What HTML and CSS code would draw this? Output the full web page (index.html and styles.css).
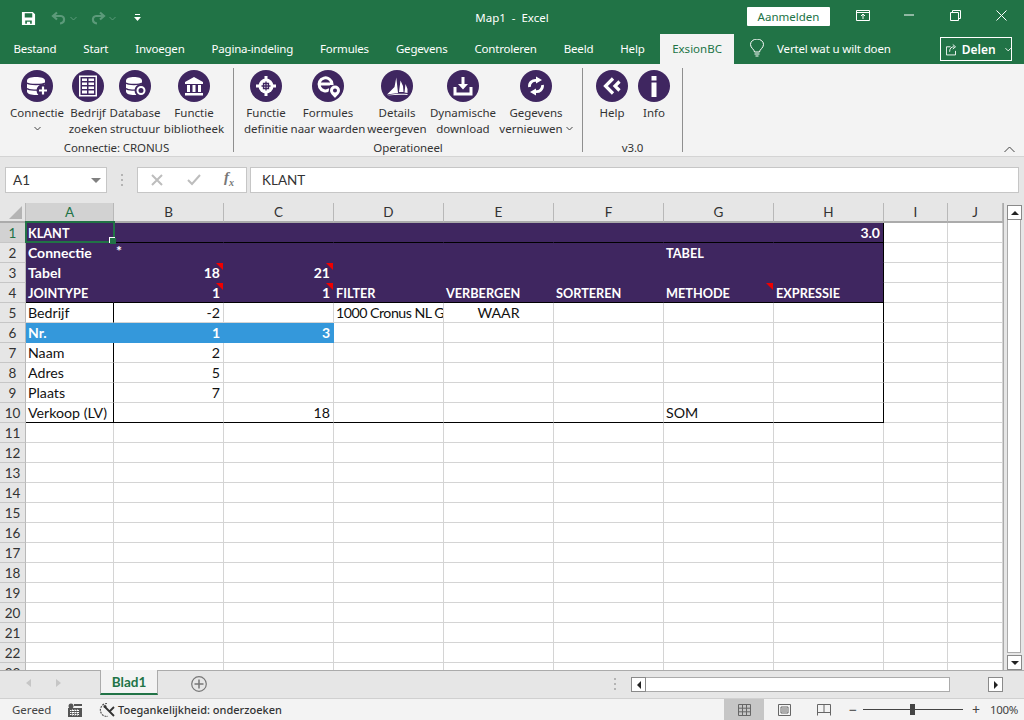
FILE: index.html
```html
<!DOCTYPE html>
<html lang="nl">

<head>
    <meta charset="UTF-8">
    <title>Map1 - Excel</title>
    <link rel="stylesheet" href="styles.css">
</head>

<body>
    <div class="app">
        <!-- Title bar -->
        <header class="titlebar">
            <div class="qat">
                <svg class="qat-save" width="15" height="15" viewBox="0 0 16 16"><path fill="#fff" fill-rule="evenodd" d="M1 1h11.500L15 3.500V15H1zM4 2.500V7h8V2.500zM4.500 10v3.600h1.800V11.500h3.400v2.100h1.800V10z"/></svg>
                <svg class="qat-undo" width="16" height="14" viewBox="0 0 16 14"><path fill="none" stroke="#5c9a7a" stroke-width="2.200" d="M6 1.500L2 5l4 3.500M2.500 5H10c4 0 4.500 7-1 7.500"/></svg>
                <svg class="qat-caret" width="7" height="5" viewBox="0 0 7 5"><path fill="none" stroke="#5c9a7a" d="M.5 1l3 3 3-3"/></svg>
                <svg class="qat-redo" width="16" height="14" viewBox="0 0 16 14"><path fill="none" stroke="#5c9a7a" stroke-width="2.200" d="M10 1.500L14 5l-4 3.500M13.500 5H6c-4 0-4.500 7 1 7.500"/></svg>
                <svg class="qat-caret" width="7" height="5" viewBox="0 0 7 5"><path fill="none" stroke="#5c9a7a" d="M.5 1l3 3 3-3"/></svg>
                <svg class="qat-more" width="7" height="8" viewBox="0 0 7 8"><path fill="#fff" d="M1 0h5v1H1zM0 3h7L3.500 7z"/></svg>
            </div>
            <div class="doc-title">Map1&nbsp; -&nbsp; Excel</div>
            <div class="win-area">
                <button class="signin">Aanmelden</button>
                <span class="win-btn"><svg width="14" height="11" viewBox="0 0 14 11"><path fill="none" stroke="#fff" d="M.5.500h13v10H.5zM.5 2.500h13M7 9V4.500M5 6l2-2 2 2"/></svg></span>
                <span class="win-btn"><svg width="10" height="2" viewBox="0 0 10 2"><path stroke="#fff" d="M0 1h10"/></svg></span>
                <span class="win-btn"><svg width="11" height="11" viewBox="0 0 11 11"><path fill="none" stroke="#fff" d="M.5 2.500h8v8h-8zM2.500 2.500v-2h8v8h-2"/></svg></span>
                <span class="win-btn"><svg width="11" height="11" viewBox="0 0 11 11"><path fill="none" stroke="#fff" d="M.5.500l10 10M10.500.500l-10 10"/></svg></span>
            </div>
        </header>

        <!-- Ribbon tabs -->
        <nav class="tabs">
            <a>Bestand</a>
            <a>Start</a>
            <a>Invoegen</a>
            <a>Pagina-indeling</a>
            <a>Formules</a>
            <a>Gegevens</a>
            <a>Controleren</a>
            <a>Beeld</a>
            <a>Help</a>
            <a class="active">ExsionBC</a>
            <div class="tell">
                <svg width="14" height="18" viewBox="0 0 14 18"><path fill="none" stroke="#fff" d="M4.500 13c0-2.500-4-4-4-7.500a6.500 5.500 0 0 1 13 0c0 3.500-4 5-4 7.500zM4.500 15h5M5.500 17h3"/></svg>
                <span>Vertel wat u wilt doen</span>
            </div>
            <div class="share">
                <svg width="13" height="13" viewBox="0 0 13 13"><path fill="none" stroke="#fff" d="M5 3.500H.5v9h10V8M4 9c0-4 2-5.500 5-5.500M7.500 1l3 2.500-3 2.500" /></svg>
                <b>Delen</b>
                <svg class="share-caret" width="7" height="5" viewBox="0 0 7 5"><path fill="none" stroke="#fff" d="M.5 1l3 3 3-3"/></svg>
            </div>
        </nav>

        <!-- Ribbon -->
        <section class="ribbon">
            <div class="group group-connect">
                <div class="buttons">
                    <div class="rbtn">
                        <svg class="ricon" viewBox="0 0 32 32"><circle cx="16" cy="16" r="16" fill="#3f2660"/><path fill="#fff" d="M6 10.500C6 8 10.500 7 15 7s9 1 9 3.500v11c0 2.500-4.500 3.500-9 3.500s-9-1-9-3.500z"/><path fill="none" stroke="#3f2660" stroke-width="1.300" d="M6 13c2 2 16 2 18 0M6 18.500c2 2 12 2 14 1"/><circle cx="22" cy="20.500" r="6.500" fill="#3f2660"/><path stroke="#fff" stroke-width="2.200" d="M18 20.500h8M22 16.500v8"/></svg>
                        <span>Connectie<br><svg class="caret" width="7" height="5" viewBox="0 0 7 5"><path fill="none" stroke="#444" d="M.5 1l3 3 3-3"/></svg></span>
                    </div>
                    <div class="rbtn">
                        <svg class="ricon" viewBox="0 0 32 32"><circle cx="16" cy="16" r="16" fill="#3f2660"/><path fill="#fff" fill-rule="evenodd" d="M7 5.500h18v21H7zM8.500 7v18h15V7z"/><path fill="#fff" d="M10 8.500h5v2.500h-5zM16.500 8.500H22V11h-5.500zM10 12.500h5V15h-5zM16.500 12.500H22V15h-5.500zM10 16.500h5V19h-5zM16.500 16.500H22V19h-5.500zM10 20.500h5v3h-5zM16.500 20.500H22v3h-5.500z"/></svg>
                        <span>Bedrijf<br>zoeken</span>
                    </div>
                    <div class="rbtn">
                        <svg class="ricon" viewBox="0 0 32 32"><circle cx="16" cy="16" r="16" fill="#3f2660"/><path fill="#fff" d="M7 10.500C7 8 11 7 15 7s8 1 8 3.500v11c0 2.500-4 3.500-8 3.500s-8-1-8-3.500z"/><path fill="none" stroke="#3f2660" stroke-width="1.300" d="M7 13c2 2 14 2 16 0M7 18.500c2 2 10 2 12 1"/><circle cx="22" cy="20.500" r="6.500" fill="#3f2660"/><circle cx="22" cy="20.500" r="3.500" fill="none" stroke="#fff" stroke-width="2"/></svg>
                        <span>Database<br>structuur</span>
                    </div>
                    <div class="rbtn">
                        <svg class="ricon" viewBox="0 0 32 32"><circle cx="16" cy="16" r="16" fill="#3f2660"/><path fill="#fff" d="M16 7l9 5v2H7v-2zM9 15h3v7H9zM14.500 15h3v7h-3zM20 15h3v7h-3zM7 23h18v2.500H7z"/></svg>
                        <span>Functie<br>bibliotheek</span>
                    </div>
                </div>
                <div class="group-label">Connectie: CRONUS</div>
            </div>

            <div class="group group-oper">
                <div class="buttons">
                    <div class="rbtn">
                        <svg class="ricon" viewBox="0 0 32 32"><circle cx="16" cy="16" r="16" fill="#3f2660"/><circle cx="16" cy="16" r="7.500" fill="#fff"/><path stroke="#fff" stroke-width="3" d="M16 6v3M16 23v3M6 16h3M23 16h3"/><path fill="none" stroke="#3f2660" stroke-width="1.300" d="M16 11.500v9M11.500 16h9M13.500 13.500h5v5h-5z"/></svg>
                        <span>Functie<br>definitie</span>
                    </div>
                    <div class="rbtn">
                        <svg class="ricon" viewBox="0 0 32 32"><circle cx="16" cy="16" r="16" fill="#3f2660"/><path fill="none" stroke="#fff" stroke-width="3" d="M7.500 14H20a6.500 6.500 0 1 0-2.500 5.500"/><path fill="#3f2660" d="M16 24l2-9 11 1-3 11-4 3z"/><path fill="#fff" fill-rule="evenodd" d="M23 15.500a5 5 0 0 1 5 5c0 3-3 5-5 7.500-2-2.500-5-4.500-5-7.500a5 5 0 0 1 5-5zM23 18.500a2 2 0 1 0 0 4 2 2 0 0 0 0-4z"/></svg>
                        <span>Formules<br>naar waarden</span>
                    </div>
                    <div class="rbtn">
                        <svg class="ricon" viewBox="0 0 32 32"><circle cx="16" cy="16" r="16" fill="#3f2660"/><path fill="#fff" d="M6 24.500l7.500-7.500 1.800-9.500 1.700 15.500zM18 22l1.500-11.500 2.500 5.500.5 6zM23.500 22.500l1-8.500 2 5v4zM6 25.500c6-2 14-2 20.500-1.500v1c-7-.5-14 0-20.500.5z"/></svg>
                        <span>Details<br>weergeven</span>
                    </div>
                    <div class="rbtn">
                        <svg class="ricon" viewBox="0 0 32 32"><circle cx="16" cy="16" r="16" fill="#3f2660"/><path fill="none" stroke="#fff" stroke-width="3" d="M8 17v7h16v-7"/><path fill="#fff" d="M14.500 7h3v7H21l-5 5.500-5-5.500h3.500z"/></svg>
                        <span>Dynamische<br>download</span>
                    </div>
                    <div class="rbtn">
                        <svg class="ricon" viewBox="0 0 32 32"><circle cx="16" cy="16" r="16" fill="#3f2660"/><path fill="none" stroke="#fff" stroke-width="2.800" d="M9.500 17c-.5-4 3-7.500 7.500-6.500M22.500 15c.5 4-3 7.500-7.500 6.500"/><path fill="#fff" d="M16 6.500l6 3.500-6 3.500zM16 18.500v7L10 22z"/></svg>
                        <span>Gegevens<br>vernieuwen <svg class="caret" width="7" height="5" viewBox="0 0 7 5"><path fill="none" stroke="#444" d="M.5 1l3 3 3-3"/></svg></span>
                    </div>
                </div>
                <div class="group-label">Operationeel</div>
            </div>

            <div class="group group-help">
                <div class="buttons">
                    <div class="rbtn">
                        <svg class="ricon" viewBox="0 0 32 32"><circle cx="16" cy="16" r="16" fill="#3f2660"/><path fill="none" stroke="#fff" stroke-width="3.200" d="M17 8.500L9.500 16l7.500 7.500M23.500 11.500L19 16l4.500 4.500"/></svg>
                        <span>Help</span>
                    </div>
                    <div class="rbtn">
                        <svg class="ricon" viewBox="0 0 32 32"><circle cx="16" cy="16" r="16" fill="#3f2660"/><path fill="#fff" d="M13.500 6h5v4.500h-5zM13.500 12.500h5V27h-5z"/></svg>
                        <span>Info</span>
                    </div>
                </div>
                <div class="group-label">v3.0</div>
            </div>

            <svg class="collapse" width="11" height="7" viewBox="0 0 11 7"><path fill="none" stroke="#444" d="M.5 6l5-5 5 5"/></svg>
        </section>

        <!-- Formula bar -->
        <section class="formulabar">
            <div class="namebox"><span>A1</span><i class="namebox-arrow"></i></div>
            <div class="grip"><i></i><i></i><i></i></div>
            <div class="fx-group">
                <svg width="14" height="12" viewBox="0 0 14 12"><path fill="none" stroke="#bdbdbd" stroke-width="2" d="M2 1l10 10M12 1L2 11"/></svg>
                <svg width="14" height="12" viewBox="0 0 14 12"><path fill="none" stroke="#bdbdbd" stroke-width="2" d="M1 6l4 4 8-9"/></svg>
                <span class="fx">f<sub>x</sub></span>
            </div>
            <div class="formula-input">KLANT</div>
        </section>

        <!-- Sheet -->
        <section class="sheet-area">
            <div class="sheet">
                <table class="grid">
                    <colgroup>
                        <col class="col-head">
                        <col class="col-a">
                        <col class="col-std" span="7">
                        <col class="col-i">
                        <col class="col-j">
                    </colgroup>
                    <thead>
                        <tr>
                            <th class="corner"><i class="corner-mark"></i></th>
                            <th class="current">A</th><th>B</th><th>C</th><th>D</th><th>E</th><th>F</th><th>G</th><th>H</th><th>I</th><th>J</th>
                        </tr>
                    </thead>
                    <tbody>
                        <tr>
                            <th class="current">1</th>
                            <td class="fill base b caps active-cell"><span class="selection"><i class="handle"></i></span>KLANT</td>
                            <td class="fill base"></td><td class="fill base"></td><td class="fill base"></td><td class="fill base"></td><td class="fill base"></td><td class="fill base"></td>
                            <td class="fill base edge b right">3.0</td>
                            <td></td><td></td>
                        </tr>
                        <tr>
                            <th>2</th>
                            <td class="fill b">Connectie</td>
                            <td class="fill b star">*</td>
                            <td class="fill"></td><td class="fill"></td><td class="fill"></td><td class="fill"></td>
                            <td class="fill b caps">TABEL</td>
                            <td class="fill edge"></td>
                            <td></td><td></td>
                        </tr>
                        <tr>
                            <th>3</th>
                            <td class="fill b">Tabel</td>
                            <td class="fill b right"><i class="note"></i>18</td>
                            <td class="fill b right"><i class="note"></i>21</td>
                            <td class="fill"></td><td class="fill"></td><td class="fill"></td><td class="fill"></td>
                            <td class="fill edge"></td>
                            <td></td><td></td>
                        </tr>
                        <tr>
                            <th>4</th>
                            <td class="fill base b caps">JOINTYPE</td>
                            <td class="fill base b right"><i class="note"></i>1</td>
                            <td class="fill base b right"><i class="note"></i>1</td>
                            <td class="fill base b caps">FILTER</td>
                            <td class="fill base b caps">VERBERGEN</td>
                            <td class="fill base b caps">SORTEREN</td>
                            <td class="fill base b caps"><i class="note"></i>METHODE</td>
                            <td class="fill base edge b caps">EXPRESSIE</td>
                            <td></td><td></td>
                        </tr>
                        <tr>
                            <th>5</th>
                            <td class="edge">Bedrijf</td>
                            <td class="right">-2</td>
                            <td></td>
                            <td class="clip">1000 Cronus NL Ge</td>
                            <td class="center">WAAR</td>
                            <td></td><td></td>
                            <td class="edge"></td>
                            <td></td><td></td>
                        </tr>
                        <tr>
                            <th>6</th>
                            <td class="hilite b">Nr.</td>
                            <td class="hilite b right">1</td>
                            <td class="hilite b right">3</td>
                            <td></td><td></td><td></td><td></td>
                            <td class="edge"></td>
                            <td></td><td></td>
                        </tr>
                        <tr>
                            <th>7</th>
                            <td class="edge">Naam</td>
                            <td class="right">2</td>
                            <td></td><td></td><td></td><td></td><td></td>
                            <td class="edge"></td>
                            <td></td><td></td>
                        </tr>
                        <tr>
                            <th>8</th>
                            <td class="edge">Adres</td>
                            <td class="right">5</td>
                            <td></td><td></td><td></td><td></td><td></td>
                            <td class="edge"></td>
                            <td></td><td></td>
                        </tr>
                        <tr>
                            <th>9</th>
                            <td class="edge">Plaats</td>
                            <td class="right">7</td>
                            <td></td><td></td><td></td><td></td><td></td>
                            <td class="edge"></td>
                            <td></td><td></td>
                        </tr>
                        <tr>
                            <th>10</th>
                            <td class="edge base">Verkoop (LV)</td>
                            <td class="base"></td>
                            <td class="base right">18</td>
                            <td class="base"></td><td class="base"></td><td class="base"></td>
                            <td class="base">SOM</td>
                            <td class="edge base"></td>
                            <td></td><td></td>
                        </tr>
                        <tr><th>11</th><td></td><td></td><td></td><td></td><td></td><td></td><td></td><td></td><td></td><td></td></tr>
                        <tr><th>12</th><td></td><td></td><td></td><td></td><td></td><td></td><td></td><td></td><td></td><td></td></tr>
                        <tr><th>13</th><td></td><td></td><td></td><td></td><td></td><td></td><td></td><td></td><td></td><td></td></tr>
                        <tr><th>14</th><td></td><td></td><td></td><td></td><td></td><td></td><td></td><td></td><td></td><td></td></tr>
                        <tr><th>15</th><td></td><td></td><td></td><td></td><td></td><td></td><td></td><td></td><td></td><td></td></tr>
                        <tr><th>16</th><td></td><td></td><td></td><td></td><td></td><td></td><td></td><td></td><td></td><td></td></tr>
                        <tr><th>17</th><td></td><td></td><td></td><td></td><td></td><td></td><td></td><td></td><td></td><td></td></tr>
                        <tr><th>18</th><td></td><td></td><td></td><td></td><td></td><td></td><td></td><td></td><td></td><td></td></tr>
                        <tr><th>19</th><td></td><td></td><td></td><td></td><td></td><td></td><td></td><td></td><td></td><td></td></tr>
                        <tr><th>20</th><td></td><td></td><td></td><td></td><td></td><td></td><td></td><td></td><td></td><td></td></tr>
                        <tr><th>21</th><td></td><td></td><td></td><td></td><td></td><td></td><td></td><td></td><td></td><td></td></tr>
                        <tr><th>22</th><td></td><td></td><td></td><td></td><td></td><td></td><td></td><td></td><td></td><td></td></tr>
                        <tr><th>23</th><td></td><td></td><td></td><td></td><td></td><td></td><td></td><td></td><td></td><td></td></tr>
                    </tbody>
                </table>
            </div>
            <div class="vscroll">
                <div class="sbtn"><i class="arrow-up"></i></div>
                <div class="vthumb"></div>
                <div class="sbtn"><i class="arrow-down"></i></div>
            </div>
        </section>

        <!-- Sheet tabs and horizontal scrollbar -->
        <section class="sheetbar">
            <div class="sheet-nav"><i class="nav-left"></i><i class="nav-right"></i></div>
            <div class="sheet-tab">Blad1</div>
            <svg class="add-sheet" width="16" height="16" viewBox="0 0 16 16"><circle cx="8" cy="8" r="7.300" fill="none" stroke="#777" stroke-width="1.200"/><path stroke="#777" stroke-width="1.500" d="M8 3.500v9M3.500 8h9"/></svg>
            <div class="grip sheet-grip"><i></i><i></i><i></i></div>
            <div class="hscroll">
                <div class="sbtn"><i class="arrow-left"></i></div>
                <div class="hthumb"></div>
                <div class="sbtn"><i class="arrow-right"></i></div>
            </div>
        </section>

        <!-- Status bar -->
        <footer class="statusbar">
            <span class="status-ready">Gereed</span>
            <svg class="status-macro" width="14" height="14" viewBox="0 0 14 14"><circle cx="3" cy="3" r="2.500" fill="#555"/><path fill="#555" d="M6 1h8v2H6zM0 5h14v9H0z"/><path stroke="#fff" d="M2 7.500h10M2 9.500h10M2 11.500h10M4.500 6.500v6M7 6.500v6M9.500 6.500v6" stroke-dasharray="1.500 1"/></svg>
            <svg class="status-access" width="17" height="16" viewBox="0 0 17 16"><path fill="none" stroke="#555" stroke-width="1.200" stroke-dasharray="2 1" d="M8 1.500a6.500 6.500 0 1 0 1 12.900"/><path fill="none" stroke="#333" stroke-width="1.800" d="M6 5l9 9M15 5l-4 4"/><circle cx="6" cy="4.500" r="1.500" fill="#333"/></svg>
            <span class="status-access-text">Toegankelijkheid: onderzoeken</span>
            <div class="status-right">
                <span class="view-btn selected"><svg width="13" height="12" viewBox="0 0 13 12"><path fill="none" stroke="#666" d="M.5.500h12v11H.5zM.5 4.200h12M.5 7.800h12M4.500.5v11M8.500.5v11"/></svg></span>
                <span class="view-btn"><svg width="13" height="12" viewBox="0 0 13 12"><path fill="none" stroke="#666" d="M.5.500h12v11H.5zM3 3h7v6H3zM4 5h5M4 7h5"/></svg></span>
                <span class="view-btn"><svg width="14" height="12" viewBox="0 0 14 12"><path fill="none" stroke="#666" d="M.5 11.500V.5h13v11M.5 8.500h13M7 .5v8"/></svg></span>
                <span class="zoom-sign">−</span>
                <div class="zoom-slider"><i></i></div>
                <span class="zoom-sign">+</span>
                <span class="zoom-value">100%</span>
            </div>
        </footer>
    </div>
</body>

</html>
```

FILE: styles.css
```css
/* Reset */
* {
    margin: 0;
    padding: 0;
    box-sizing: border-box;
}

html,
body {
    width: 1024px;
    height: 720px;
    overflow: hidden;
}

body {
    font-family: "Noto Sans", "Open Sans", sans-serif;
    font-size: 11.500px;
    color: #333;
    background-color: #e6e6e6;
}

.app {
    display: flex;
    flex-direction: column;
    height: 720px;
}

/* Title bar */
.titlebar {
    display: grid;
    grid-template-columns: 1fr auto 1fr;
    height: 32px;
    background-color: #217346;
    color: white;
}

.qat {
    display: flex;
    align-items: center;
    padding: 0 0 0 21px;
}

.qat-undo {
    margin-left: 15px;
}

.qat-redo {
    margin-left: 13px;
}

.qat-caret {
    margin-left: 3px;
}

.qat-more {
    margin-left: 18px;
}

.doc-title {
    line-height: 36px;
}

.win-area {
    display: flex;
    justify-content: flex-end;
    align-items: flex-start;
}

.signin {
    width: 83px;
    height: 19px;
    margin: 7px 10px 0 0;
    border: none;
    border-radius: 1px;
    background-color: white;
    color: #217346;
    font: 11.500px "Noto Sans", sans-serif;
}

.win-btn {
    display: flex;
    justify-content: center;
    align-items: center;
    width: 46px;
    height: 30px;
}

/* Ribbon tabs */
.tabs {
    display: flex;
    height: 32px;
    background-color: #217346;
    color: white;
}

.tabs a {
    padding: 8px 13.500px 0;
    line-height: 18px;
    letter-spacing: -0.2px;
}

.tabs a.active {
    width: 74px;
    margin: 2px 0 0 2px;
    padding: 6px 0 0;
    background-color: #f3f3f3;
    color: #217346;
    letter-spacing: 0;
    text-align: center;
}

.tell {
    display: flex;
    align-items: center;
    gap: 13px;
    margin-left: 16px;
    letter-spacing: -0.15px;
}

.share {
    display: flex;
    align-items: center;
    width: 72px;
    height: 24px;
    margin: 5px 12px 0 auto;
    padding-left: 5px;
    border: 1px solid white;
    font-size: 12px;
}

.share b {
    margin-left: 4px;
    font-weight: 600;
}

.share-caret {
    margin-left: 9px;
}

/* Ribbon */
.ribbon {
    position: relative;
    display: flex;
    height: 93px;
    background-color: #f3f3f3;
    border-bottom: 1px solid #d4d4d4;
}

.group {
    display: flex;
    flex-direction: column;
    height: 84px;
    margin-top: 4px;
    border-right: 1px solid #8f8f8f;
}

.group-connect {
    width: 234px;
    padding-left: 8px;
}

.group-oper {
    width: 349px;
    padding-left: 8px;
}

.group-help {
    width: 100px;
    padding-left: 10px;
}

.buttons {
    display: grid;
    flex: none;
    height: 73px;
    padding-top: 2px;
}

.group-connect .buttons {
    grid-template-columns: 58px 44px 50px 68px;
}

.group-oper .buttons {
    grid-template-columns: 48px 76px 62px 70px 76px;
}

.group-help .buttons {
    grid-template-columns: 38px 46px;
}

.rbtn {
    display: flex;
    flex-direction: column;
    align-items: center;
    white-space: nowrap;
    line-height: 16px;
    text-align: center;
}

.ricon {
    flex: none;
    width: 32px;
    height: 32px;
    margin-bottom: 3px;
}

.caret {
    vertical-align: 2px;
}

.group-label {
    flex: none;
    margin-left: -8px;
    line-height: 14px;
    text-align: center;
    letter-spacing: -0.1px;
}

.group-help .group-label {
    margin-left: -10px;
}

.collapse {
    position: absolute;
    right: 9px;
    bottom: 3px;
}

/* Formula bar */
.formulabar {
    display: flex;
    height: 46px;
    padding: 10px 5px;
    background-color: #e6e6e6;
}

.namebox,
.fx-group,
.formula-input {
    height: 26px;
    background-color: white;
    border: 1px solid #c6c6c6;
    font-family: "Lato", sans-serif;
    font-size: 13.500px;
    line-height: 24px;
}

.namebox {
    display: flex;
    justify-content: space-between;
    align-items: center;
    width: 102px;
    padding: 0 5px 0 7px;
}

.namebox-arrow {
    border-top: 5px solid #808080;
    border-left: 5px solid transparent;
    border-right: 5px solid transparent;
}

.grip {
    display: flex;
    flex-direction: column;
    justify-content: center;
    gap: 3px;
    width: 30px;
    align-items: center;
}

.grip i {
    width: 2px;
    height: 2px;
    background-color: #b4b4b4;
}

.fx-group {
    display: flex;
    align-items: center;
    justify-content: space-between;
    width: 110px;
    padding: 0 12px;
    margin-right: 3px;
}

.fx {
    font-family: "Liberation Serif", serif;
    font-style: italic;
    font-size: 15px;
    font-weight: bold;
    color: #777;
}

.fx sub {
    font-size: 10px;
}

.formula-input {
    width: 769px;
    padding-left: 11px;
    color: #333;
}

/* Sheet */
.sheet-area {
    display: flex;
    height: 467px;
}

.sheet {
    width: 1004px;
    height: 467px;
    overflow: hidden;
    background-color: white;
    border-right: 1px solid #ababab;
}

.grid {
    table-layout: fixed;
    width: 1003px;
    border-collapse: separate;
    border-spacing: 0;
    font-family: "Lato", sans-serif;
    font-size: 14.200px;
}

.col-head {
    width: 26px;
}

.col-a {
    width: 88px;
}

.col-std {
    width: 110px;
}

.col-i {
    width: 64px;
}

.col-j {
    width: 55px;
}

.grid th {
    height: 20px;
    background-color: #e6e6e6;
    border-right: 1px solid #b8b8b8;
    border-bottom: 1px solid #c6c6c6;
    font-size: 13.500px;
    font-weight: normal;
    color: #333;
    line-height: 18px;
}

.grid thead th {
    border-bottom: 2px solid #ababab;
}

.grid th.current {
    background-color: #d2d2d2;
    color: #217346;
}

.grid th.corner {
    position: relative;
}

.corner-mark {
    position: absolute;
    right: 3px;
    bottom: 2px;
    border-bottom: 13px solid #b4b4b4;
    border-left: 13px solid transparent;
}

.grid td {
    position: relative;
    height: 20px;
    padding: 0 2px;
    border-right: 1px solid #d4d4d4;
    border-bottom: 1px solid #d4d4d4;
    color: #111;
    line-height: 18px;
    white-space: nowrap;
    vertical-align: bottom;
}

.grid td.fill {
    background-color: #3f2660;
    border-color: #3f2660;
    color: white;
}

.grid td.hilite {
    background-color: #3498db;
    border-color: #3498db;
    color: white;
}

.grid td.b {
    font-size: 14px;
    font-weight: bold;
}

.grid td.caps {
    font-size: 12.700px;
}

.grid td.right {
    padding-right: 3px;
    text-align: right;
}

.grid td.center {
    text-align: center;
}

.grid td.clip {
    overflow: hidden;
    letter-spacing: -0.5px;
}

.grid td.star {
    line-height: 16px;
    vertical-align: top;
}

.grid td.base {
    border-bottom-color: black;
}

.grid td.edge {
    border-right-color: black;
}

.grid td.active-cell {
    z-index: 2;
}

.selection {
    position: absolute;
    left: -1px;
    top: -2px;
    width: 90px;
    height: 22px;
    border: 2px solid #217346;
}

.handle {
    position: absolute;
    right: -3px;
    bottom: -3px;
    width: 6px;
    height: 6px;
    background-color: #217346;
    box-shadow: -1px -1px 0 white;
}

.note {
    position: absolute;
    top: 0;
    right: 0;
    border-top: 7px solid #f00000;
    border-left: 7px solid transparent;
}

/* Scrollbars */
.vscroll {
    display: flex;
    flex-direction: column;
    width: 20px;
    padding: 2px 3px 0;
}

.sbtn {
    display: flex;
    flex: none;
    justify-content: center;
    align-items: center;
    width: 15px;
    height: 15px;
    background-color: white;
    border: 1px solid #8a8a8a;
}

.vthumb {
    flex: 1;
    margin-bottom: 2px;
    background-color: white;
    border: 1px solid #ababab;
    border-top: none;
}

.arrow-up {
    border-bottom: 4px solid #222;
    border-left: 4px solid transparent;
    border-right: 4px solid transparent;
}

.arrow-down {
    border-top: 4px solid #222;
    border-left: 4px solid transparent;
    border-right: 4px solid transparent;
}

.arrow-left {
    border-right: 4px solid #222;
    border-top: 4px solid transparent;
    border-bottom: 4px solid transparent;
}

.arrow-right {
    border-left: 4px solid #222;
    border-top: 4px solid transparent;
    border-bottom: 4px solid transparent;
}

/* Sheet tabs */
.sheetbar {
    display: flex;
    height: 28px;
    background-color: #e6e6e6;
    border-top: 1px solid #ababab;
}

.sheet-nav {
    display: flex;
    justify-content: space-between;
    align-items: center;
    width: 100px;
    height: 24px;
    padding: 0 39px 0 26px;
}

.nav-left {
    border-right: 5px solid #c6c6c6;
    border-top: 4px solid transparent;
    border-bottom: 4px solid transparent;
}

.nav-right {
    border-left: 5px solid #c6c6c6;
    border-top: 4px solid transparent;
    border-bottom: 4px solid transparent;
}

.sheet-tab {
    width: 58px;
    height: 25px;
    margin-top: -1px;
    background-color: #f3f3f3;
    border-left: 1px solid #ababab;
    border-right: 1px solid #ababab;
    border-bottom: 2px solid #217346;
    color: #217346;
    font-family: "Lato", sans-serif;
    font-size: 13.500px;
    font-weight: bold;
    line-height: 25px;
    text-align: center;
}

.add-sheet {
    margin: 5px 0 0 33px;
}

.sheet-grip {
    width: 8px;
    height: 26px;
    margin-left: auto;
    margin-right: 12px;
}

.hscroll {
    display: flex;
    width: 372px;
    height: 15px;
    margin: 6px 21px 0 0;
}

.hthumb {
    width: 304px;
    margin-right: 38px;
    background-color: white;
    border: 1px solid #ababab;
    border-left: none;
}

/* Status bar */
.statusbar {
    display: flex;
    align-items: center;
    height: 22px;
    background-color: #f3f3f3;
    border-top: 1px solid #d0d0d0;
    color: #444;
}

.status-ready {
    margin-left: 12px;
    width: 56px;
}

.status-access {
    margin-left: 17px;
}

.status-access-text {
    margin-left: 2px;
    font-size: 11px;
    font-weight: 500;
    color: #333;
}

.status-right {
    display: flex;
    align-items: center;
    height: 21px;
    margin-left: auto;
}

.view-btn {
    display: flex;
    justify-content: center;
    align-items: center;
    width: 40px;
    height: 21px;
}

.view-btn.selected {
    background-color: #c6c6c6;
}

.zoom-sign {
    width: 10px;
    margin-left: 5px;
    font-size: 14px;
    line-height: 16px;
}

.zoom-slider {
    position: relative;
    width: 100px;
    height: 1px;
    margin: 0 4px;
    background-color: #444;
}

.zoom-slider i {
    position: absolute;
    left: 47px;
    top: -5px;
    width: 5px;
    height: 11px;
    background-color: #444;
}

.zoom-value {
    width: 42px;
    padding-left: 8px;
    letter-spacing: -0.3px;
}
```
